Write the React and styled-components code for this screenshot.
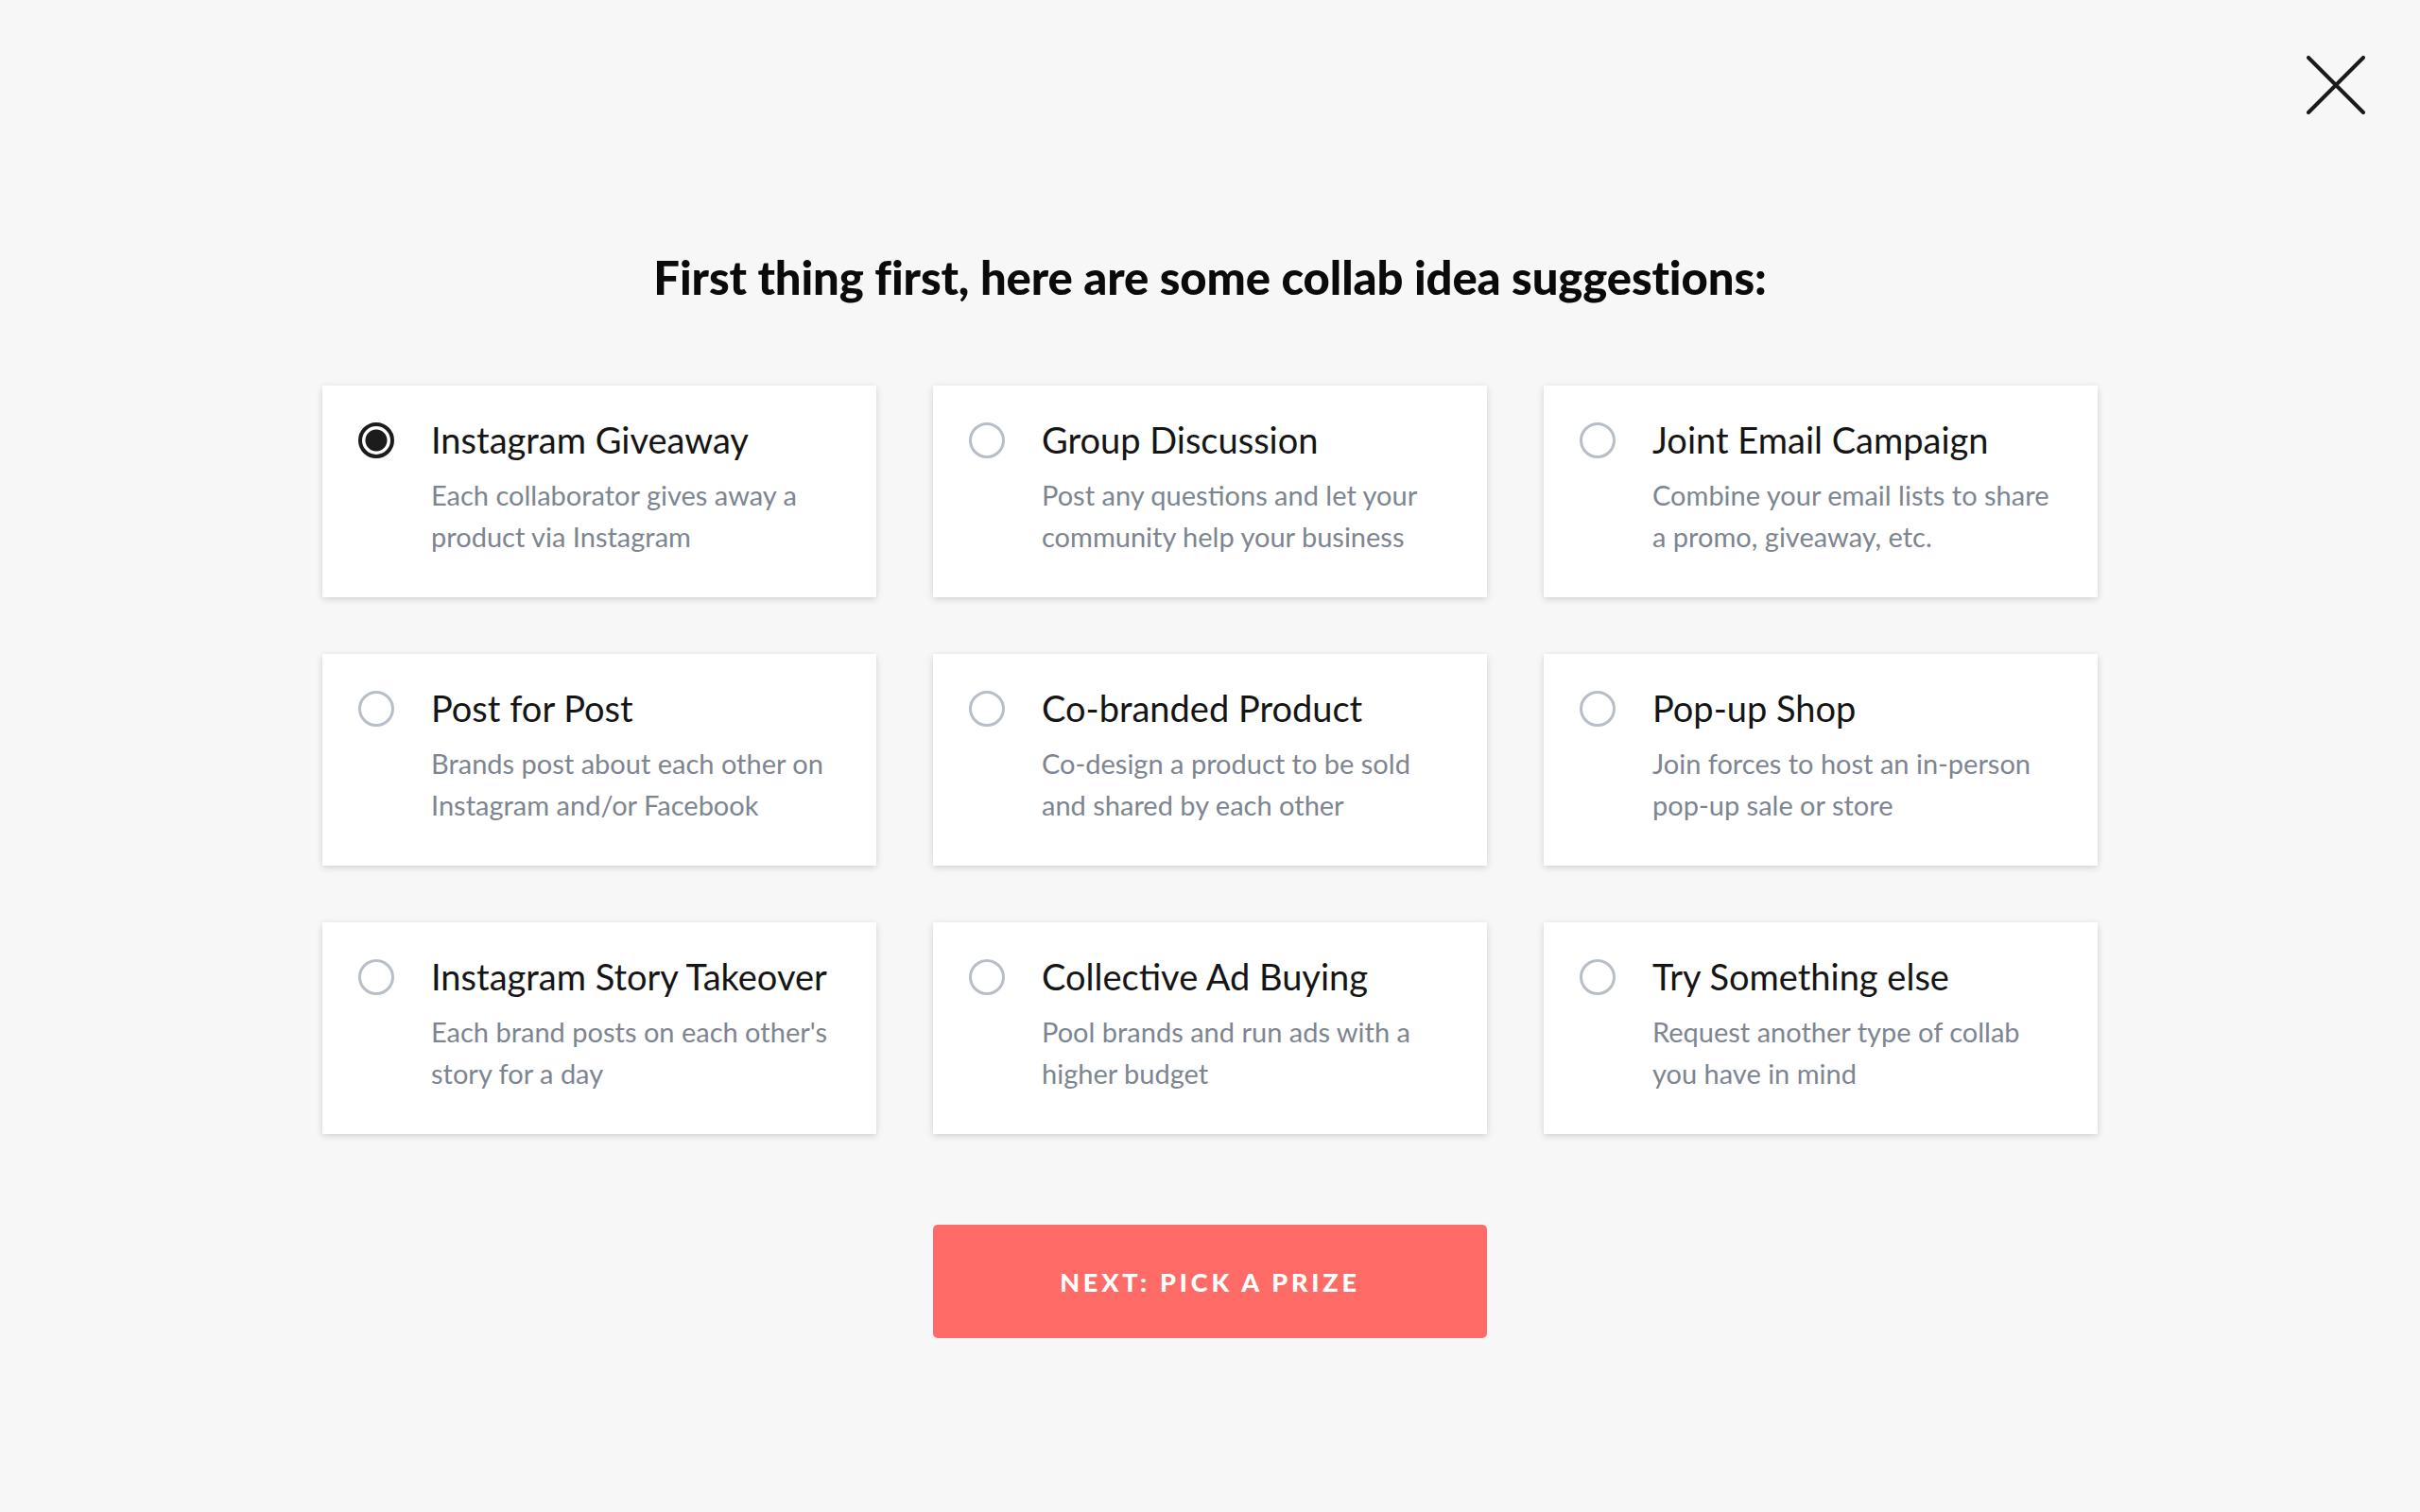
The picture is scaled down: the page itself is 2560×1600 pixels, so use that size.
import React, { useState } from 'react';
import styled, { createGlobalStyle, css } from 'styled-components';

const GlobalStyle = createGlobalStyle`
    body {
        margin: 0;
        background: #f7f7f7;
        font-family: "Lato", "Noto Sans", sans-serif;
    }
`;

const ideas = [
    { title: 'Instagram Giveaway', desc: 'Each collaborator gives away a product via Instagram' },
    { title: 'Group Discussion', desc: 'Post any questions and let your community help your business' },
    { title: 'Joint Email Campaign', desc: 'Combine your email lists to share a promo, giveaway, etc.' },
    { title: 'Post for Post', desc: 'Brands post about each other on Instagram and/or Facebook' },
    { title: 'Co-branded Product', desc: 'Co-design a product to be sold and shared by each other' },
    { title: 'Pop-up Shop', desc: 'Join forces to host an in-person pop-up sale or store' },
    { title: 'Instagram Story Takeover', desc: "Each brand posts on each other's story for a day" },
    { title: 'Collective Ad Buying', desc: 'Pool brands and run ads with a higher budget' },
    { title: 'Try Something else', desc: 'Request another type of collab you have in mind' },
];

const Page = styled.div`
    min-height: 1600px;
    display: flex;
    flex-direction: column;
    align-items: center;
`;

const TopBar = styled.div`
    align-self: stretch;
    display: flex;
    justify-content: flex-end;
    padding: 58px 57px 0;
`;

const CloseButton = styled.button`
    width: 64px;
    height: 64px;
    padding: 0;
    border: none;
    background: none;
    cursor: pointer;
    display: flex;
    align-items: center;
    justify-content: center;
`;

const Heading = styled.h1`
    margin: 143px 0 0;
    font-family: "Lato", sans-serif;
    font-weight: 900;
    font-size: 49px;
    line-height: 57px;
    color: #0a0a0a;
    letter-spacing: -0.1px;
`;

const Grid = styled.div`
    margin-top: 86px;
    display: grid;
    grid-template-columns: repeat(3, 586px);
    grid-auto-rows: 224px;
    gap: 60px;
`;

const Card = styled.label`
    background: #fff;
    box-shadow: 0 2px 7px rgba(0, 0, 0, 0.16);
    padding: 23px 36px 0 38px;
    display: flex;
    gap: 39px;
    cursor: pointer;
    box-sizing: border-box;
`;

const Radio = styled.span`
    flex: none;
    width: 38px;
    height: 38px;
    margin-top: 16px;
    border-radius: 50%;
    box-sizing: border-box;
    border: 3.5px solid #b7bec8;
    ${props => props.checked && css`
        border: 4px solid #1c1c1c;
        background: radial-gradient(circle, #1c1c1c 0 11px, transparent 12px);
    `}
`;

const CardText = styled.div`
    display: flex;
    flex-direction: column;
    padding-top: 11px;
`;

const CardTitle = styled.div`
    font-size: 38px;
    line-height: 46px;
    color: #151515;
`;

const CardDesc = styled.div`
    margin-top: 14px;
    font-size: 29px;
    line-height: 44px;
    color: #7d8590;
`;

const NextButton = styled.button`
    margin-top: 96px;
    width: 586px;
    height: 120px;
    border: none;
    border-radius: 5px;
    background: #ff6b66;
    color: #fff;
    font-family: "Lato", sans-serif;
    font-weight: 900;
    font-size: 27px;
    letter-spacing: 3.8px;
    cursor: pointer;
`;

export default function App() {
    const [selected, setSelected] = useState(0);
    return (
        <Page>
            <GlobalStyle />
            <TopBar>
                <CloseButton aria-label="Close">
                    <svg width="62" height="62" viewBox="0 0 62 62">
                        <path d="M2 2 L60 60 M60 2 L2 60" stroke="#1a1a1a" strokeWidth="4" strokeLinecap="round" />
                    </svg>
                </CloseButton>
            </TopBar>
            <Heading>First thing first, here are some collab idea suggestions:</Heading>
            <Grid>
                {ideas.map((idea, i) =>
                    <Card key={idea.title} onClick={() => setSelected(i)}>
                        <Radio checked={selected === i} />
                        <CardText>
                            <CardTitle>{idea.title}</CardTitle>
                            <CardDesc>{idea.desc}</CardDesc>
                        </CardText>
                    </Card>
                )}
            </Grid>
            <NextButton>NEXT: PICK A PRIZE</NextButton>
        </Page>
    );
}
